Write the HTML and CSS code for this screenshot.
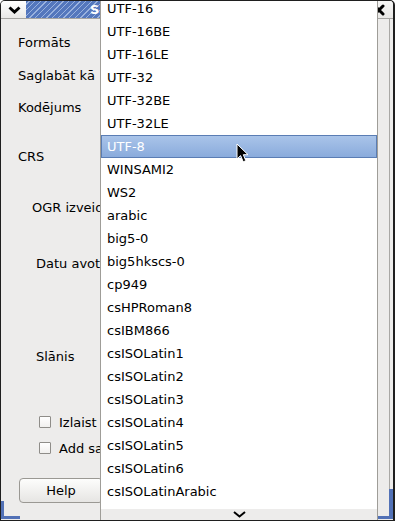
FILE: index.html
```html
<!DOCTYPE html>
<html lang="lv">
<head>
  <meta charset="UTF-8" />
  <title>Saglabāt vektoru slāni kā...</title>
  <link rel="stylesheet" href="styles.css">
</head>
<body>
  <div class="window">
    <div class="titlebar">
      <div class="menu-btn">
        <svg width="13" height="8" viewBox="0 0 13 8"><polyline points="1.5,1.5 6.5,6 11.5,1.5" fill="none" stroke="#000" stroke-width="3"/></svg>
      </div>
      <div class="title">Saglabāt vektoru slāni kā...</div>
      <div class="close-btn">
        <svg width="12" height="12" viewBox="0 0 12 12"><path d="M2 2 L10 10 M10 2 L2 10" stroke="#000" stroke-width="3" stroke-linecap="round"/></svg>
      </div>
    </div>

    <div class="client">
      <div class="form">
        <div class="label">Formāts</div>
        <div class="label">Saglabāt kā</div>
        <div class="label">Kodējums</div>
        <div class="label">CRS</div>
        <div class="label group">OGR izveides opcijas</div>
        <div class="label sub">Datu avots</div>
        <div class="label sub">Slānis</div>
        <label class="check"><span class="box"></span>Izlaist atribūtu izveidi</label>
        <label class="check"><span class="box"></span>Add saved file to map</label>
        <div class="buttons"><button class="btn">Help</button></div>
      </div>
    </div>

    <div class="popup">
      <ul class="options">
        <li>UTF-16</li>
        <li>UTF-16BE</li>
        <li>UTF-16LE</li>
        <li>UTF-32</li>
        <li>UTF-32BE</li>
        <li>UTF-32LE</li>
        <li class="selected">UTF-8</li>
        <li>WINSAMI2</li>
        <li>WS2</li>
        <li>arabic</li>
        <li>big5-0</li>
        <li>big5hkscs-0</li>
        <li>cp949</li>
        <li>csHPRoman8</li>
        <li>csIBM866</li>
        <li>csISOLatin1</li>
        <li>csISOLatin2</li>
        <li>csISOLatin3</li>
        <li>csISOLatin4</li>
        <li>csISOLatin5</li>
        <li>csISOLatin6</li>
        <li>csISOLatinArabic</li>
        <li>csISOLatinCyrillic</li>
      </ul>
      <div class="scroll-down">
        <svg width="13" height="7" viewBox="0 0 13 7"><polyline points="1,1 6.5,5.5 12,1" fill="none" stroke="#000" stroke-width="2"/></svg>
      </div>
    </div>

    <span class="corner corner-left"></span>
    <span class="corner corner-right"></span>

    <svg class="cursor" width="14" height="21" viewBox="0 0 14 21">
      <path d="M1 1 L1 16 L4.6 12.6 L7.2 18.8 L9.8 17.7 L7.3 11.7 L12 11.7 Z" fill="#000" stroke="#fff" stroke-width="1" stroke-linejoin="round"/>
    </svg>
  </div>
</body>
</html>
```

FILE: styles.css
```css
html, body {
  margin: 0;
  padding: 0;
  background: #fff;
}
body {
  font-family: 'DejaVu Sans', 'Liberation Sans', sans-serif;
  font-size: 13px;
  color: #000;
}
.window {
  position: relative;
  width: 395px;
  height: 521px;
  box-sizing: border-box;
  border: 1px solid #1f1f1f;
  border-right-width: 2px;
  border-radius: 5px 5px 0 0;
  background: #edeceb;
  overflow: hidden;
}
.titlebar {
  display: flex;
  height: 18px;
  box-sizing: border-box;
  border-bottom: 1px solid #a6a5a2;
}
.menu-btn {
  width: 25px;
  display: flex;
  align-items: center;
  justify-content: center;
  padding-left: 2px;
  box-sizing: border-box;
  background: linear-gradient(#ffffff, #e9e8e6);
}
.title {
  flex: 1;
  padding-left: 64px;
  line-height: 17px;
  font-weight: bold;
  color: #fff;
  white-space: nowrap;
  background: repeating-linear-gradient(135deg, #5477bd 0 2px, #9ab2de 2px 3px, #5477bd 3px 4px);
}
.close-btn {
  width: 29px;
  display: flex;
  align-items: center;
  justify-content: center;
  background: linear-gradient(#f7f7f6, #e8e7e5);
}
.client {
  height: 500px;
  margin-right: 3px;
  border-right: 1px solid #a9a8a5;
}
.form {
  display: grid;
  grid-template-rows: 33px 32px 49px 51px 56px 93px 65px 26px 42px 25px;
  justify-items: start;
  padding: 12px 0 0 17px;
}
.label {
  height: 24px;
  line-height: 24px;
  white-space: nowrap;
}
.label.group {
  margin-left: 14px;
}
.label.sub {
  margin-left: 18px;
}
.check {
  display: flex;
  align-items: center;
  gap: 8px;
  height: 24px;
  margin-left: 21px;
  white-space: nowrap;
}
.check .box {
  width: 10px;
  height: 10px;
  border: 1px solid #8f8d89;
  border-radius: 1px;
  background: linear-gradient(#ffffff, #f1f0ee);
}
.btn {
  width: 84px;
  height: 25px;
  margin-left: 1px;
  font: inherit;
  color: #000;
  border: 1px solid #9a9893;
  border-radius: 4px;
  background: linear-gradient(#fdfdfc, #e6e5e3);
}
.popup {
  position: absolute;
  left: 99px;
  top: -1px;
  width: 278px;
  height: 521px;
  box-sizing: border-box;
  border: 1px solid #9f9d98;
  border-top: none;
  background: #fff;
  overflow: hidden;
}
.options {
  list-style: none;
  margin: -3px 0 0;
  padding: 0;
}
.options li {
  height: 23px;
  line-height: 23px;
  padding-left: 6px;
  white-space: nowrap;
}
.options li.selected {
  box-sizing: border-box;
  padding-left: 5px;
  line-height: 21px;
  color: #fff;
  border: 1px solid #5a7db4;
  background: linear-gradient(#a9c4e9, #8aabdc);
}
.scroll-down {
  position: absolute;
  left: 0;
  right: 0;
  bottom: 0;
  height: 11px;
  display: flex;
  align-items: center;
  justify-content: center;
  background: #edeceb;
}
.corner {
  position: absolute;
  background: #5271b6;
}
.corner-left {
  left: 0;
  bottom: 1px;
  width: 3px;
  height: 18px;
}
.corner-left::after {
  content: '';
  position: absolute;
  left: 0;
  bottom: 0;
  width: 19px;
  height: 3px;
  background: #5271b6;
}
.corner-right {
  right: 0;
  bottom: 1px;
  width: 4px;
  height: 30px;
}
.corner-right::after {
  content: '';
  position: absolute;
  right: 0;
  bottom: 0;
  width: 15px;
  height: 3px;
  background: #5271b6;
}
.cursor {
  position: absolute;
  left: 235px;
  top: 142px;
}
```
